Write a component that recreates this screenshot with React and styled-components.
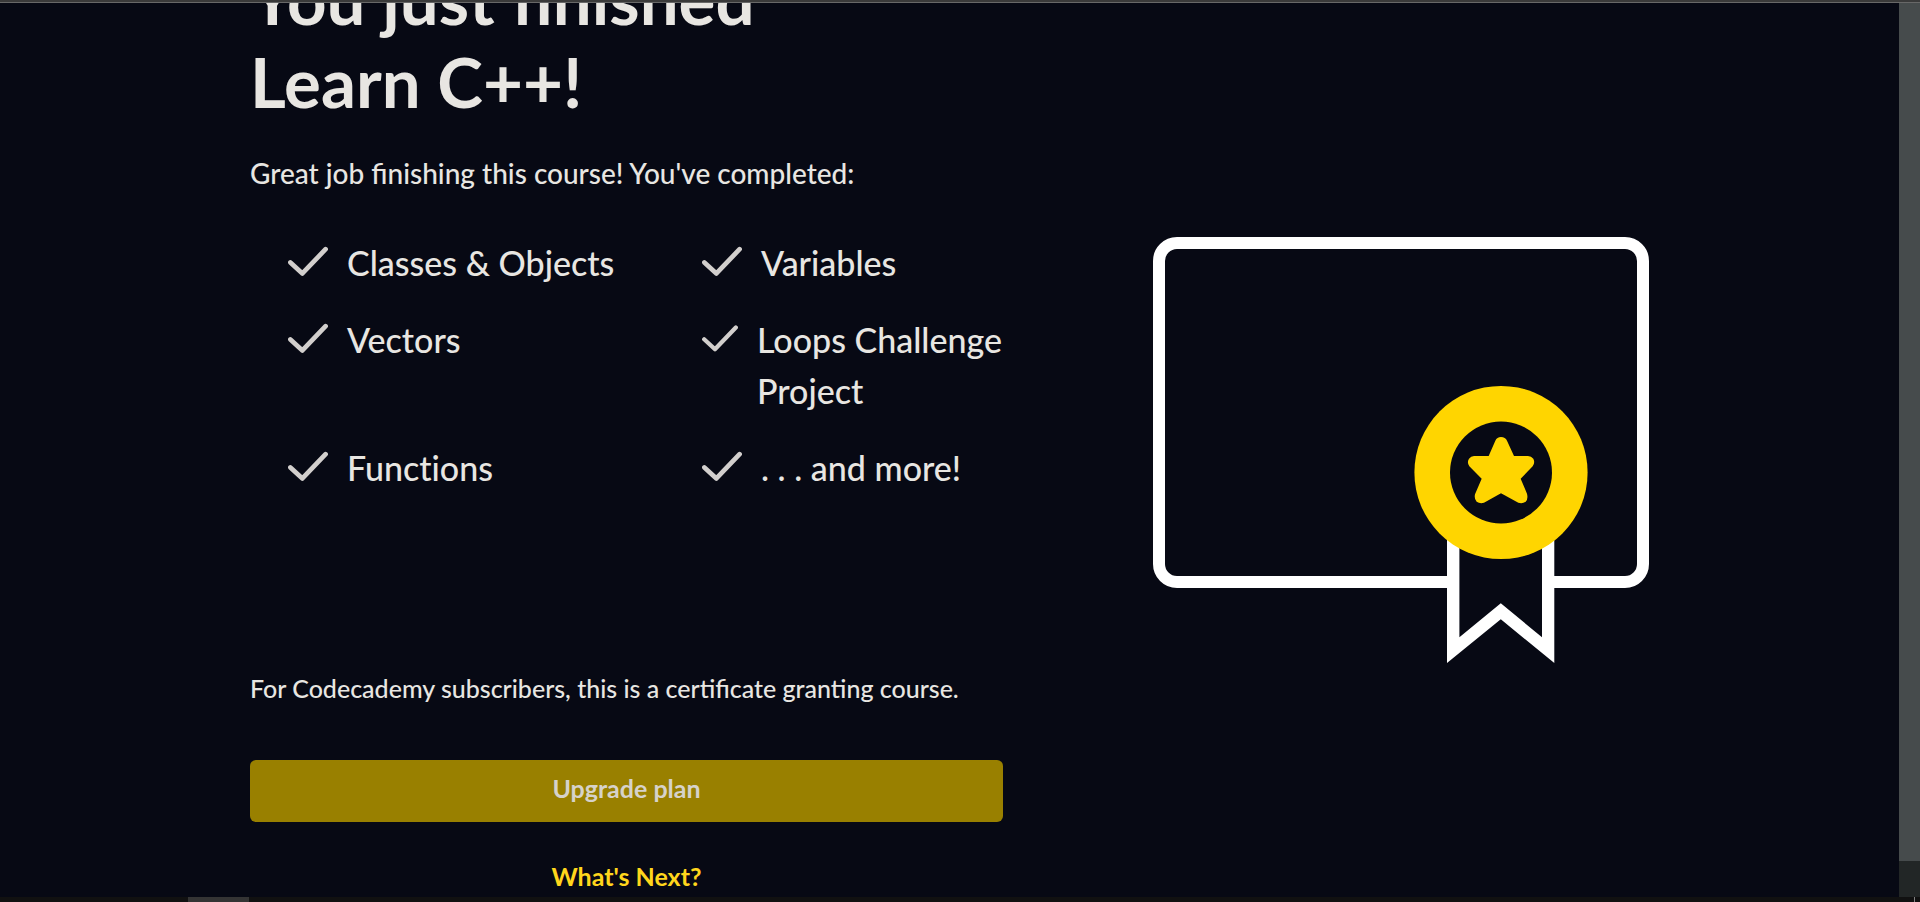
import React from 'react';
import styled, { createGlobalStyle } from 'styled-components';

const color = {
  background: '#070914',
  text: '#e8e6e2',
  muted: '#d2cfcd',
  white: '#ffffff',
  yellow: '#ffd500',
  link: '#ffd61c',
  button: '#998000',
  buttonText: '#d6d2ca',
};

const GlobalStyle = createGlobalStyle`
  *, *::before, *::after { box-sizing: border-box; }
  body {
    margin: 0;
    background: ${color.background};
    color: ${color.text};
    font-family: Lato, "Liberation Sans", sans-serif;
    font-weight: 500;
  }
`;

const Window = styled.div`
  display: flex;
  flex-direction: column;
  height: 100vh;
  overflow: hidden;
`;

const TopEdge = styled.div`
  flex: none;
  height: 3px;
  background: #3a3a3a;
  border-bottom: 1px solid #686868;
`;

const View = styled.div`
  display: flex;
  flex: 1;
  min-height: 0;
`;

const Scroller = styled.main`
  flex: 1;
  min-width: 0;
  overflow: hidden;
`;

/* Shown scrolled part of the way down, so the heading starts above the edge. */
const Content = styled.div`
  display: grid;
  grid-template-columns: minmax(0, 753fr) minmax(0, 496fr);
  column-gap: 150px;
  align-items: center;
  margin-top: -46px;
  padding: 0 250px;
`;

const ScrollTrack = styled.div`
  flex: none;
  width: 21px;
  background: #222626;
`;

const ScrollThumb = styled.div`
  height: 96%;
  background: #464b4c;
`;

const BottomEdge = styled.div`
  display: flex;
  justify-content: space-between;
  flex: none;
  height: 5px;
  padding: 0 5px 0 188px;
  background: #111111;
`;

const TaskMark = styled.div`
  width: ${({ $wide }) => ($wide ? 61 : 1)}px;
  background: ${({ $wide }) => ($wide ? '#343434' : '#808080')};
`;

const Summary = styled.section`
  display: flex;
  flex-direction: column;
`;

const Title = styled.h1`
  margin: 0 0 29px;
  font-size: 69px;
  font-weight: 700;
  line-height: 83px;
`;

const Intro = styled.p`
  margin: 0 0 43px;
  font-size: 28px;
  line-height: 42px;
`;

const TopicList = styled.ul`
  display: grid;
  grid-template-columns: minmax(0, 384fr) minmax(0, 301fr);
  gap: 26px 30px;
  margin: 0 0 176px;
  padding: 0 0 0 38px;
  list-style: none;
`;

const Topic = styled.li`
  display: flex;
  gap: 19px;
  font-size: 34px;
  line-height: 51px;
  font-variant-ligatures: none;
`;

const CheckIcon = styled.svg`
  flex: none;
  width: ${({ $compact }) => ($compact ? 36 : 40)}px;
  height: 49px;
  fill: none;
  stroke: ${color.muted};
  stroke-width: 4.7;
  stroke-linecap: round;
  stroke-linejoin: round;
`;

const Note = styled.p`
  margin: 0 0 53px;
  font-size: 25px;
  line-height: 38px;
`;

const UpgradeButton = styled.button`
  height: 62px;
  margin: 0 0 35px;
  padding: 0 0 6px;
  border: 0;
  border-radius: 6px;
  background: ${color.button};
  color: ${color.buttonText};
  font: inherit;
  font-size: 25px;
  font-weight: 700;
  cursor: pointer;
`;

const NextLink = styled.a`
  align-self: center;
  color: ${color.link};
  font-size: 25px;
  font-weight: 700;
  line-height: 38px;
  text-decoration: none;
`;

const Artwork = styled.svg`
  display: block;
  width: 100%;
  height: auto;
  margin-top: 48px;
`;

const topics = [
  { name: 'Classes & Objects' },
  { name: 'Variables' },
  { name: 'Vectors' },
  { name: 'Loops Challenge Project', compact: true },
  { name: 'Functions' },
  { name: '. . . and more!' },
];

function Check({ compact }) {
  return (
    <CheckIcon $compact={compact} viewBox="0 0 40 30" aria-hidden="true">
      <path d="M2.4 15.9 14.4 26.9 37.6 2.7" />
    </CheckIcon>
  );
}

function Certificate() {
  return (
    <Artwork viewBox="0 0 496 426" role="img" aria-label="Certificate">
      <rect x="6" y="6" width="484" height="339" rx="18" fill="none" stroke={color.white} strokeWidth="12" />
      <path d="M294 220H401.3V426L347.8 382.3 294 426Z" fill={color.white} />
      <path d="M306.4 220H389V400.3L347.8 366.3 306.4 400.3Z" fill={color.background} />
      <circle cx="348" cy="235.5" r="86.6" fill={color.yellow} />
      <circle cx="348" cy="235.5" r="51" fill={color.background} />
      <path
        transform="translate(237 133) scale(.33333)"
        fill={color.yellow}
        d="M333 201Q346 201 351 212L372 258H414Q424 258 430 266 436 278 428 289L392 326 411 371Q415 387 407 395 397 402 385 398L333 370 282 398Q270 402 260 395 252 387 255 373L275 326 238 289Q230 278 237 266 243 258 252 258H296L316 212Q321 201 333 201Z"
      />
    </Artwork>
  );
}

export default function App() {
  return (
    <Window>
      <GlobalStyle />
      <TopEdge />
      <View>
        <Scroller>
          <Content>
            <Summary>
              <Title>
                You just finished
                <br />
                Learn C++!
              </Title>
              <Intro>Great job finishing this course! You've completed:</Intro>
              <TopicList>
                {topics.map(({ name, compact }) => (
                  <Topic key={name}>
                    <Check compact={compact} />
                    <span>{name}</span>
                  </Topic>
                ))}
              </TopicList>
              <Note>For Codecademy subscribers, this is a certificate granting course.</Note>
              <UpgradeButton type="button">Upgrade plan</UpgradeButton>
              <NextLink href="#next">What's Next?</NextLink>
            </Summary>
            <Certificate />
          </Content>
        </Scroller>
        <ScrollTrack>
          <ScrollThumb />
        </ScrollTrack>
      </View>
      <BottomEdge>
        <TaskMark $wide />
        <TaskMark />
      </BottomEdge>
    </Window>
  );
}
